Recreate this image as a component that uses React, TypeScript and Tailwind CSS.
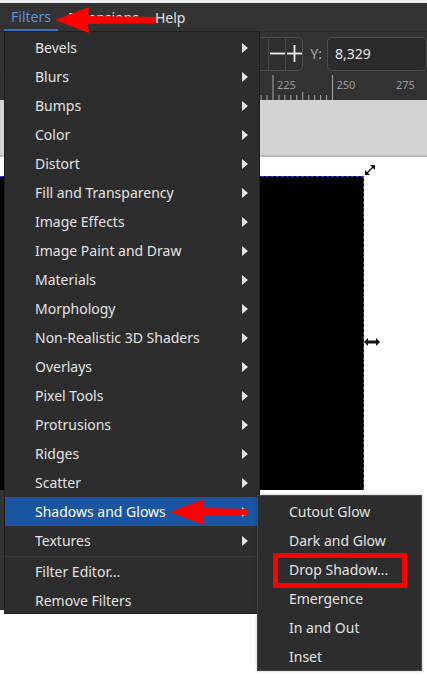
import React from 'react';

const mainItems = [
  'Bevels',
  'Blurs',
  'Bumps',
  'Color',
  'Distort',
  'Fill and Transparency',
  'Image Effects',
  'Image Paint and Draw',
  'Materials',
  'Morphology',
  'Non-Realistic 3D Shaders',
  'Overlays',
  'Pixel Tools',
  'Protrusions',
  'Ridges',
  'Scatter',
  'Shadows and Glows',
  'Textures',
];

const subItems = ['Cutout Glow', 'Dark and Glow', 'Drop Shadow...', 'Emergence', 'In and Out', 'Inset'];

const Caret = () => (
  <svg width="6" height="10" viewBox="0 0 6 10" className="shrink-0">
    <path d="M0 0 L6 5 L0 10 Z" fill="#e6e6e6" />
  </svg>
);

const Ruler = () => {
  const ticks: React.ReactNode[] = [];
  const start = 273 - 59.5 * 5;
  for (let i = 0; i <= 60; i++) {
    const x = start + i * 5.95;
    const h = i % 10 === 0 ? 25 : i % 5 === 0 ? 8 : 5;
    ticks.push(<line key={i} x1={x} x2={x} y1={25 - h} y2={25} stroke="#a8a8a8" strokeWidth="1" />);
  }
  const labels = [200, 225, 250, 275];
  return (
    <svg width="427" height="25" className="block">
      {ticks}
      {labels.map((v, i) => (
        <text key={v} x={213.5 + i * 59.5 + 4} y="14" fontSize="11" fill="#9c9c9c" fontFamily="Noto Sans, sans-serif">
          {v}
        </text>
      ))}
    </svg>
  );
};

const LeftArrow = ({ w }: { w: number }) => (
  <svg width={w} height="28" viewBox={`0 0 ${w} 28`}>
    <path d={`M0 14 L34 1 L33 10 L${w} 11 L${w} 17 L33 18 L34 27 Z`} fill="#ff0000" />
  </svg>
);

export default function App() {
  return (
    <div className="relative w-[427px] h-[678px] overflow-hidden bg-white" style={{ fontFamily: '"Noto Sans", "Open Sans", sans-serif' }}>
      {/* page */}
      <div className="h-[3px] bg-[#eef0f2]" />
      <div className="h-[28px] bg-[#333333] flex items-center text-[14px] text-[#e0e0e0]">
        <div className="ml-[4px] w-[54px] h-full flex items-center justify-center text-[#5b8fd8] border-b-[2px] border-[#3a73c6]">Filters</div>
        <div className="ml-[10px]">Extensions</div>
        <div className="ml-[16px]">Help</div>
      </div>
      <div className="h-[44px] bg-[#333333] flex items-center pl-[200px] border-t border-[#2a2a2a]">
        <div className="w-[118px] h-[34px] rounded-[5px] border border-[#4e4e4e] bg-[#2f2f2f] flex justify-end">
          <div className="w-[17px] border-l border-[#474747] flex items-center justify-center">
            <svg width="15" height="15" viewBox="0 0 15 15">
              <line x1="0" y1="7.5" x2="15" y2="7.5" stroke="#f0f0f0" strokeWidth="1.8" />
            </svg>
          </div>
          <div className="w-[17px] border-l border-[#474747] flex items-center justify-center">
            <svg width="15" height="17" viewBox="0 0 15 17">
              <line x1="0" y1="8.5" x2="15" y2="8.5" stroke="#f0f0f0" strokeWidth="1.8" />
              <line x1="7.5" y1="0" x2="7.5" y2="17" stroke="#f0f0f0" strokeWidth="1.8" />
            </svg>
          </div>
        </div>
        <div className="ml-[7px] text-[14px] text-[#a9a9a9]">Y:</div>
        <div className="ml-[5px] w-[100px] shrink-0 h-[34px] rounded-[5px] border border-[#4e4e4e] bg-[#2b2b2b] flex items-center pl-[7px] text-[14px] text-[#e8e8e8]">8,329</div>
      </div>
      <div className="h-[25px] bg-[#323232]">
        <Ruler />
      </div>
      <div className="h-[57px] bg-[#d3d3d3] border-b-[2px] border-[#bdbdbd]" />
      <div className="relative h-[519px] bg-white">
        <div className="h-[19px]" />
        <div className="w-[364px] h-[314px] bg-black border-t border-r border-dashed border-[#3b3bd6]" />
        <div className="w-[4px] h-[120px] bg-[#333333]" />
        {/* handles */}
        <svg className="absolute left-[364px] top-[7px]" width="12" height="12" viewBox="0 0 12 12">
          <path d="M1 11 L1 6 L3 8 L8 3 L6 1 L11 1 L11 6 L9 4 L4 9 L6 11 Z" fill="#111" />
        </svg>
        <svg className="absolute left-[364px] top-[181px]" width="16" height="8" viewBox="0 0 16 8">
          <path d="M0 4 L4 0 L4 2.5 L12 2.5 L12 0 L16 4 L12 8 L12 5.5 L4 5.5 L4 8 Z" fill="#111" />
        </svg>
      </div>

      {/* Filters menu */}
      <div className="absolute left-[4px] top-[31px] w-[256px] h-[583px] bg-[#2d2d2d] border border-[#1e1e1e] pt-[1px] text-[14px] text-[#e3e3e3]">
        {mainItems.map((label) => (
          <div
            key={label}
            className={`h-[29px] flex items-center pl-[30px] pr-[11px] ${label === 'Shadows and Glows' ? 'bg-[#1a55a3] text-white' : ''}`}
          >
            <span className="flex-1">{label}</span>
            <Caret />
          </div>
        ))}
        <div className="h-[2px] flex items-center">
          <div className="w-full h-px bg-[#3d3d3d]" />
        </div>
        <div className="h-[29px] flex items-center pl-[30px]">Filter Editor...</div>
        <div className="h-[29px] flex items-center pl-[30px]">Remove Filters</div>
      </div>

      {/* Shadows and Glows submenu */}
      <div className="absolute left-[257px] top-[495px] w-[165px] h-[176px] bg-[#2d2d2d] border border-[#474747] pt-[1px] text-[14px] text-[#e3e3e3] shadow-[0_0_3px_rgba(0,0,0,0.25)]">
        {subItems.map((label) => (
          <div key={label} className="h-[29px] flex items-center pl-[31px]">
            {label}
          </div>
        ))}
      </div>

      {/* annotations */}
      <div className="absolute left-[273px] top-[553px] w-[134px] h-[35px] border-[5px] border-[#ff0000]" />
      <div className="absolute left-[55px] top-[6px]">
        <LeftArrow w={101} />
      </div>
      <div className="absolute left-[170px] top-[498px]">
        <LeftArrow w={78} />
      </div>
    </div>
  );
}
